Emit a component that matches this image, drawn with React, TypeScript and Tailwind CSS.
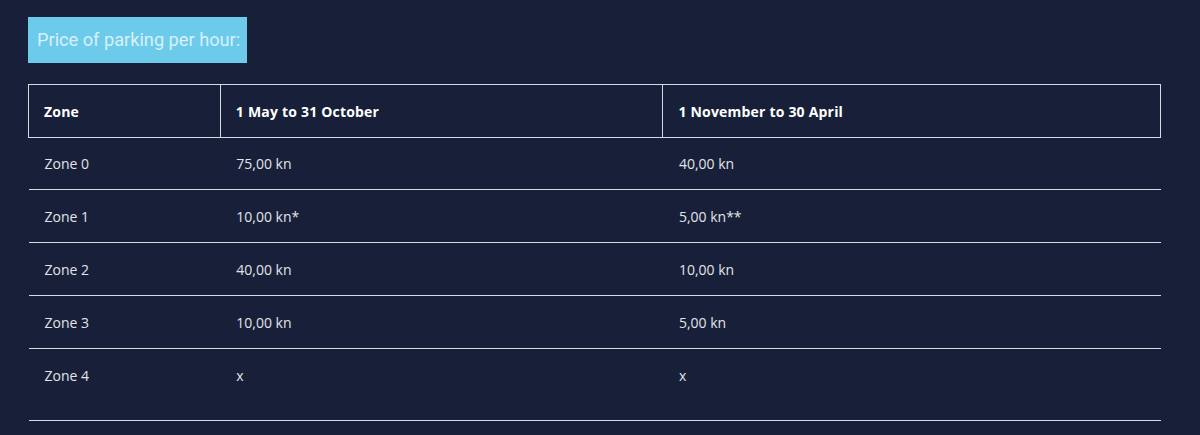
import React from "react";

const rows = [
  ["Zone 0", "75,00 kn", "40,00 kn"],
  ["Zone 1", "10,00 kn*", "5,00 kn**"],
  ["Zone 2", "40,00 kn", "10,00 kn"],
  ["Zone 3", "10,00 kn", "5,00 kn"],
  ["Zone 4", "x", "x"],
];

const heights = ["h-[52px]", "h-[53px]", "h-[53px]", "h-[53px]", "h-[72px]"];

export default function App() {
  return (
    <div className="w-[1200px] h-[435px] bg-[#172038] overflow-hidden pt-[17px] pl-[28px]" style={{ fontFamily: '"Open Sans", "Noto Sans", sans-serif' }}>
      <div className="inline-flex items-center h-[46px] w-[219px] pl-[9px] bg-[#6ccbea] text-[#d9f0f9] text-[18.2px] whitespace-nowrap" style={{ fontFamily: 'Roboto, "Liberation Sans", sans-serif', fontWeight: 400 }}>
        Price of parking per hour:
      </div>
      <table className="mt-[21px] w-[1133px] border-collapse">
        <colgroup>
          <col className="w-[192px]" />
          <col className="w-[443px]" />
          <col className="w-[498px]" />
        </colgroup>
        <thead>
          <tr className="h-[53px]">
            {["Zone", "1 May to 31 October", "1 November to 30 April"].map((h) => (
              <th key={h} className="border border-[#d5dae3] text-left font-bold text-[14px] tracking-[0.2px] text-white pl-[15px] align-middle">
                {h}
              </th>
            ))}
          </tr>
        </thead>
        <tbody>
          {rows.map((r, i) => (
            <tr key={i} className={`border-b border-[#d6dbe4] ${heights[i]}`}>
              {r.map((c, j) => (
                <td key={j} className={`pl-[16px] text-[14px] text-[#e1e4eb] ${i === 4 ? "align-top pt-[16px]" : "align-middle"}`}>
                  {c}
                </td>
              ))}
            </tr>
          ))}
        </tbody>
      </table>
    </div>
  );
}
